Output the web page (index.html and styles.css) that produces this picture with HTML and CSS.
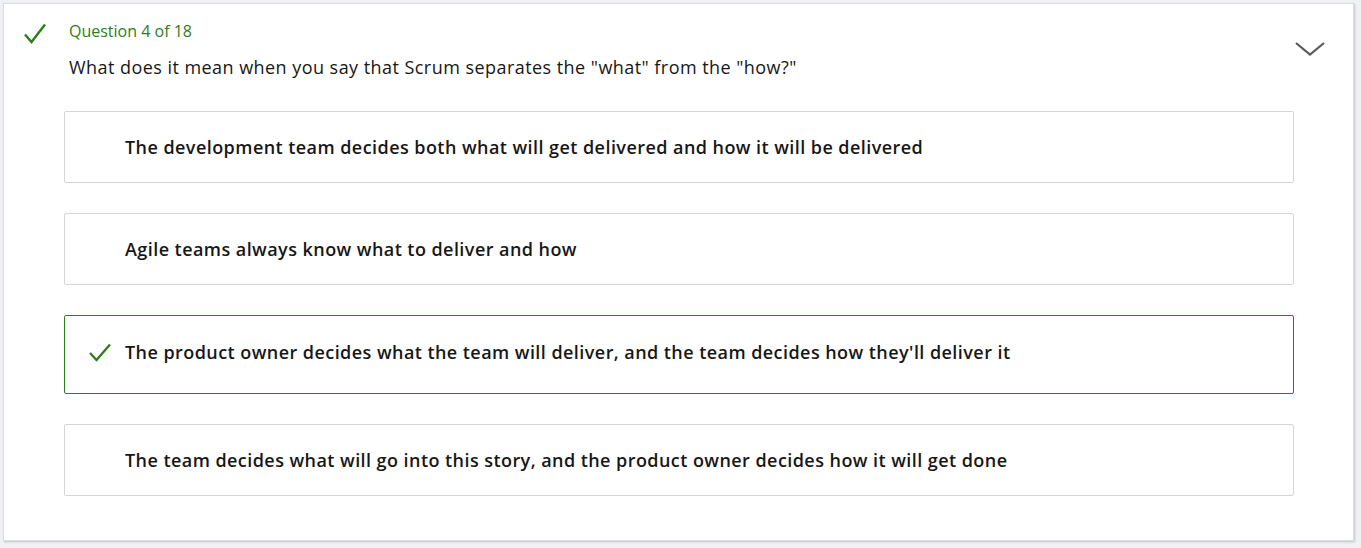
FILE: index.html
```html
<!DOCTYPE html>
<html lang="en">
<head>
<meta charset="utf-8">
<title>Question 4 of 18</title>
<link rel="stylesheet" href="styles.css">
</head>
<body>
<section class="card">
  <div class="head">
    <svg class="status-icon" viewBox="0 0 22 21" width="22" height="21" aria-hidden="true">
      <path d="M1 11.5 L7.5 19 L21 1.5" fill="none" stroke="#2e7d1e" stroke-width="2.4"/>
    </svg>
    <div class="head-text">
      <div class="qnum">Question 4 of 18</div>
      <div class="qtext">What does it mean when you say that Scrum separates the "what" from the "how?"</div>
    </div>
    <svg class="chevron" viewBox="0 0 30 14" width="30" height="14" aria-hidden="true">
      <path d="M1 1 L15 12.5 L29 1" fill="none" stroke="#5a5a5a" stroke-width="2.2"/>
    </svg>
  </div>
  <ul class="options">
    <li class="option"><span class="mark"></span><span class="label">The development team decides both what will get delivered and how it will be delivered</span></li>
    <li class="option"><span class="mark"></span><span class="label">Agile teams always know what to deliver and how</span></li>
    <li class="option correct"><span class="mark"><svg viewBox="0 0 22 19" width="22" height="19" aria-hidden="true"><path d="M1 10 L7.5 17 L21 1.5" fill="none" stroke="#2e7d1e" stroke-width="2.3"/></svg></span><span class="label">The product owner decides what the team will deliver, and the team decides how they'll deliver it</span></li>
    <li class="option"><span class="mark"></span><span class="label">The team decides what will go into this story, and the product owner decides how it will get done</span></li>
  </ul>
</section>
</body>
</html>
```

FILE: styles.css
```css
html, body {
  margin: 0;
  padding: 0;
}
body {
  background: #eff1f4;
  font-family: "Open Sans", "Noto Sans", "Liberation Sans", sans-serif;
  color: #171717;
  width: 1361px;
  height: 548px;
  overflow: hidden;
}
.card {
  margin: 3px 0 0 3px;
  width: 1351px;
  height: 538px;
  box-sizing: border-box;
  background: #fff;
  border: 1px solid #dcdcdc;
  box-shadow: 1px 1px 2px rgba(0,0,0,0.18);
  padding: 15px 59px 0 20px;
}
.head {
  display: flex;
  align-items: flex-start;
}
.status-icon {
  margin-top: 4px;
  flex: none;
}
.head-text {
  flex: 1;
  margin-left: 23px;
}
.qnum {
  color: #2e7d1e;
  font-size: 16px;
  line-height: 24px;
}
.qtext {
  margin-top: 12px;
  font-size: 18px;
  line-height: 24px;
  letter-spacing: 0.45px;
  color: #171717;
}
.chevron {
  flex: none;
  margin-top: 23px;
  margin-right: -31px;
}
.options {
  list-style: none;
  margin: 32px 0 0 40px;
  padding: 0;
  display: flex;
  flex-direction: column;
  gap: 30px;
}
.option {
  display: flex;
  align-items: center;
  height: 72px;
  box-sizing: border-box;
  border: 1px solid #d6d6d6;
  border-radius: 2px;
  padding: 0 24px;
}
.option.correct {
  height: 79px;
  border-color: #2e7d1e;
  padding-bottom: 5px;
}
.mark {
  width: 22px;
  flex: none;
  display: flex;
  margin-right: 14px;
}
.label {
  font-size: 18px;
  font-weight: 600;
  line-height: 24px;
  letter-spacing: 0.44px;
}
```
